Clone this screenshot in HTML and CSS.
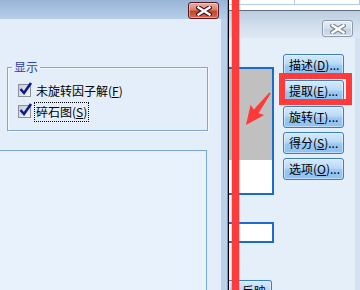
FILE: index.html
```html
<!DOCTYPE html>
<html lang="zh">
<head>
<meta charset="utf-8">
<link rel="stylesheet" href="styles.css">
</head>
<body>
<div class="screen">
  <div class="win-left">
    <div class="titlebar">
      <span class="close close-red">
        <svg width="16" height="10" viewBox="0 0 16 10"><path d="M2.5 1.5 L13.5 8.5 M13.5 1.5 L2.5 8.5" stroke="#4a1420" stroke-width="4.6" stroke-linecap="square"/><path d="M2.5 1.5 L13.5 8.5 M13.5 1.5 L2.5 8.5" stroke="#fff" stroke-width="2.4" stroke-linecap="square"/></svg>
      </span>
    </div>
    <div class="frame">
      <div class="client">
        <fieldset class="group">
          <legend>显示</legend>
          <div class="check">
            <span class="box"><svg width="15" height="14" viewBox="0 0 15 14"><path d="M2.5 7 L6 11 L13 1" fill="none" stroke="#0c1c8c" stroke-width="2.6"/></svg></span>
            <span class="label">未旋转因子解(<u>F</u>)</span>
          </div>
          <div class="check">
            <span class="box"><svg width="15" height="14" viewBox="0 0 15 14"><path d="M2.5 7 L6 11 L13 1" fill="none" stroke="#0c1c8c" stroke-width="2.6"/></svg></span>
            <span class="label focus">碎石图(<u>S</u>)</span>
          </div>
        </fieldset>
        <div class="panel"></div>
      </div>
      <div class="edge"></div>
    </div>
  </div>
  <div class="divider"></div>
  <div class="win-right">
    <div class="sheet"><div class="sheet-cell"></div><div class="sheet-cell"></div></div>
    <div class="titlebar2">
      <span class="close close-gray">
        <svg width="16" height="10" viewBox="0 0 16 10"><path d="M2.5 1.5 L13.5 8.5 M13.5 1.5 L2.5 8.5" stroke="#7b8799" stroke-width="4.6" stroke-linecap="square"/><path d="M2.5 1.5 L13.5 8.5 M13.5 1.5 L2.5 8.5" stroke="#fff" stroke-width="2.4" stroke-linecap="square"/></svg>
      </span>
    </div>
    <div class="client2">
      <div class="leftcol">
        <div class="listbox"><div class="list-sel"></div></div>
        <div class="textbox"></div>
        <div class="btn partial">反映</div>
      </div>
      <div class="btncol">
        <div class="btn">描述(<u>D</u>)...</div>
        <div class="btn">提取(<u>E</u>)...</div>
        <div class="btn">旋转(<u>T</u>)...</div>
        <div class="btn">得分(<u>S</u>)...</div>
        <div class="btn">选项(<u>O</u>)...</div>
      </div>
      <div class="spacer"></div>
      <div class="edge2"></div>
    </div>
  </div>

  <div class="redbar"></div>
  <div class="redbox"></div>
  <svg class="arrow" width="360" height="290" viewBox="0 0 360 290">
    <polygon points="0,-0.8 23,-3 21,-8.5 40,0 21,8.5 23,3 0,0.8" fill="#ff3a3a" transform="translate(270,93) rotate(126.87)"/>
  </svg>
</div>
</body>
</html>
```

FILE: styles.css
```css
* { box-sizing: border-box; }
html, body { margin: 0; padding: 0; }
body {
  width: 360px;
  height: 290px;
  overflow: hidden;
  font-family: "Noto Sans CJK SC", "Noto Sans", sans-serif;
  font-size: 12px;
  color: #000;
}
.screen {
  position: relative;
  width: 360px;
  height: 290px;
  overflow: hidden;
  display: flex;
  background: #e4effa;
}

/* left window */
.win-left {
  width: 228px;
  height: 290px;
  display: flex;
  flex-direction: column;
  border-right: 1px solid #3fb0c8;
  flex: none;
}
.titlebar {
  height: 22px;
  background: linear-gradient(#98b5d6, #b6cee8);
  display: flex;
  justify-content: flex-end;
  align-items: flex-start;
  padding: 2px 8px 0 0;
}
.close {
  width: 31px;
  height: 17px;
  border-radius: 3px;
  display: flex;
  align-items: center;
  justify-content: center;
}
.close-red {
  border: 1px solid #5a1626;
  background: linear-gradient(#eab2a4 0%, #d9806a 45%, #c2442a 55%, #d26a4c 100%);
  box-shadow: inset 0 0 0 1px rgba(255,220,210,0.5);
}
.close-gray {
  border: 1px solid #8c9ab0;
  background: linear-gradient(#e6ecf3 0%, #d6dfe9 50%, #c6d2df 55%, #d2dce8 100%);
  box-shadow: inset 0 0 0 1px rgba(255,255,255,0.6);
}
.frame {
  flex: 1;
  display: flex;
}
.client {
  width: 221px;
  background: #e3eefa;
  padding-top: 40px;
}
.edge {
  flex: 1;
  background: #b9d1ea;
}
.group {
  margin: 0 0 0 7px;
  width: 201px;
  height: 72px;
  border: 1px solid #84a6cc;
  box-shadow: 1px 1px 0 #f4f8fd, inset 1px 1px 0 #f4f8fd;
  padding: 5px 0 0 10px;
}
.group legend {
  color: #2b3fa8;
  padding: 0 2px;
  margin-left: -6px;
  line-height: 16px;
  font-size: 12px;
}
.check {
  height: 21px;
  display: flex;
  align-items: center;
  gap: 4px;
}
.box {
  position: relative;
  width: 13px;
  height: 13px;
  border: 1px solid #8a8f98;
  background: linear-gradient(135deg, #c8ccd2, #f2f3f5);
  flex: none;
}
.box svg {
  position: absolute;
  left: -1px;
  top: -3px;
}
.label {
  line-height: 16px;
  padding: 1px 1px;
}
.focus {
  outline: 1px dotted #000;
  outline-offset: 0;
}
.panel {
  margin: 19px 0 0 -1px;
  width: 208px;
  height: 200px;
  background: #e8f2fd;
  border: 1px solid #78a6d6;
}

.divider {
  width: 1px;
  background: #000;
  flex: none;
}

/* right window */
.win-right {
  flex: 1;
  display: flex;
  flex-direction: column;
  min-width: 0;
  overflow: hidden;
}
.sheet {
  height: 11px;
  background: #fff;
  border-bottom: 1px solid #5e6c7a;
  display: flex;
  flex: none;
}
.sheet-cell {
  width: 68px;
  height: 5px;
  border-bottom: 1px solid #b3cbe4;
  border-right: 1px solid #b3cbe4;
}
.titlebar2 {
  height: 27px;
  flex: none;
  background: linear-gradient(#bccde0, #d4e0ee 60%, #dde8f4);
  display: flex;
  justify-content: flex-end;
  align-items: flex-start;
  padding: 9px 7px 0 0;
}
.client2 {
  flex: 1;
  display: flex;
  background: #e4effa;
}
.leftcol {
  width: 45px;
  flex: none;
  display: flex;
  flex-direction: column;
}
.listbox {
  margin-top: 29px;
  height: 128px;
  border: 2px solid #1a6bd0;
  border-left: none;
  background: #fff;
}
.list-sel {
  height: 91px;
  background: #c0c0c0;
}
.textbox {
  margin-top: 27px;
  height: 21px;
  border: 2px solid #1a6bd0;
  border-left: none;
  background: #fff;
}
.btncol {
  margin: 16px 0 0 9px;
  width: 61px;
  display: flex;
  flex-direction: column;
  gap: 4px;
}
.btn {
  height: 22px;
  border: 1px solid #3b7ccd;
  border-radius: 3px;
  background: linear-gradient(#d6eafc 0%, #b8daf8 45%, #98c8f4 55%, #8ec2f2 100%);
  box-shadow: inset 0 0 0 1px rgba(255,255,255,0.45);
  padding-left: 5px;
  line-height: 20px;
  white-space: nowrap;
  font-size: 12px;
}
.partial {
  margin-top: 37px;
  width: 43px;
  border-left: none;
  border-radius: 0 3px 0 0;
  text-align: right;
  padding: 0 5px 0 0;
  line-height: 20px;
}
.spacer { flex: 1; }
.edge2 {
  width: 5px;
  background: #d3e1f0;
  flex: none;
}

/* overlays */
.redbar {
  position: absolute;
  left: 232px;
  top: 0;
  width: 7px;
  height: 290px;
  background: #ff3a3a;
  box-shadow: 0 0 0 0.5px rgba(255,90,90,0.6);
}
.redbox {
  position: absolute;
  left: 279px;
  top: 73px;
  width: 73px;
  height: 32px;
  border: 6px solid #ff3a3a;
}
.arrow {
  position: absolute;
  left: 0;
  top: 0;
}
```
